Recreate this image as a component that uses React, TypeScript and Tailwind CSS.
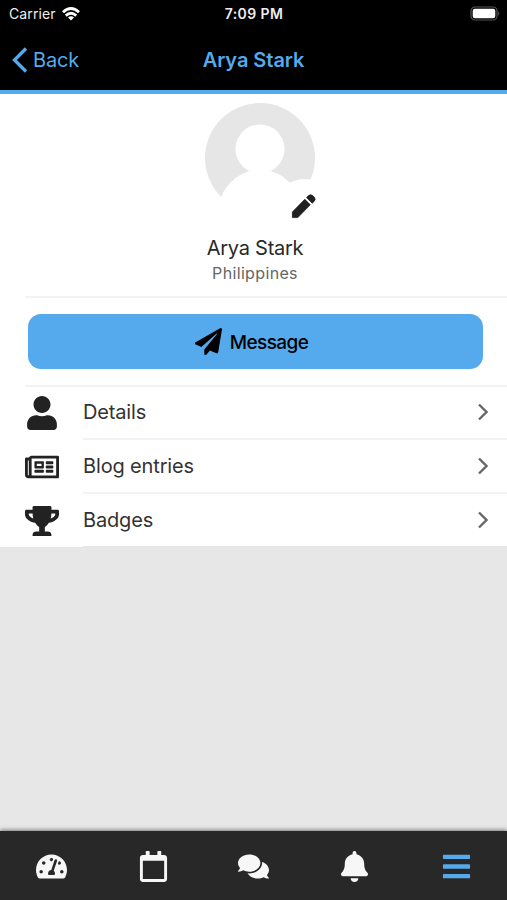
import React from "react";
import {
  FaBars,
  FaBell,
  FaComments,
  FaPaperPlane,
  FaRegCalendar,
  FaRegNewspaper,
  FaTachometerAlt,
  FaTrophy,
  FaUser,
} from "react-icons/fa";

function StatusBar() {
  return (
    <div className="grid h-7 grid-cols-3 items-center pl-[7px] pr-[6px] text-[13px] leading-none text-[#eee]">
      <div className="flex items-center gap-[6px] pl-[2px]">
        <span className="text-[14px] tracking-[0.1px]">Carrier</span>
        <svg width="18" height="14" viewBox="0 0 18 14" fill="none" stroke="#fff" strokeWidth="2.8">
          <path d="M1 5.2Q9-2.2 17 5.2" />
          <path d="M3.8 8.6Q9 3.8 14.2 8.6" />
          <path d="M6 10.6Q9 8 12 10.6L9 13.5Z" fill="#fff" stroke="none" />
        </svg>
      </div>
      <span className="text-center text-[14px] font-semibold tracking-[0.4px]">7:09 PM</span>
      <svg className="justify-self-end" width="31" height="16" viewBox="0 0 31 16">
        <rect x="1" y="1" width="26" height="13" rx="4" fill="none" stroke="#555" strokeWidth="1.2" />
        <rect x="2.7" y="2.7" width="22.6" height="9.6" rx="2.2" fill="#fff" />
        <path d="M28.3 5.2Q30.3 7.5 28.3 9.8Z" fill="#666" />
      </svg>
    </div>
  );
}

function Avatar() {
  return (
    <svg className="ml-[13px] shrink-0" width="112" height="120" viewBox="0 0 112 120">
      <circle cx="56" cy="55" r="55" fill="#e6e6e6" />
      <circle cx="56" cy="46" r="24.5" fill="#fff" />
      <path d="M0 120L17 94.5C21.5 83 31 73 43 69C45 67 67 67 69 69C76 71 81 75 85.5 79.5L112 79V120Z" fill="#fff" />
      <ellipse cx="101" cy="103" rx="29" ry="27" fill="#fff" />
      <g fill="#202020" stroke="#202020" strokeWidth="0.8" strokeLinejoin="round">
        <path d="M88.4 109L100.8 96.3L106.3 101.8L93.8 114.6H88.4Z" />
        <path d="M102.5 94.6L104.6 92.6Q106.5 90.9 108.7 92.6L110.4 94.3Q112 96.3 110.3 98.2L108.2 100.2Z" />
      </g>
    </svg>
  );
}

function Chevron() {
  return (
    <svg width="10" height="18" viewBox="0 0 10 18" fill="none" stroke="#666" strokeWidth="2.3">
      <path d="M1 1.5L8.5 9L1 16.5" />
    </svg>
  );
}

function Row({ icon, label }: { icon: React.ReactNode; label: string }) {
  return (
    <div className="group flex h-[54px] pl-[25px] last:h-[53px]">
      <div className="flex w-[34px] items-center justify-center text-[#222]">{icon}</div>
      <div className="ml-6 flex flex-1 items-center justify-between border-b-2 border-[#f3f3f3] pr-[19px] group-last:border-b group-last:border-[#e7e7e7]">
        <span className="text-[20px] tracking-[-0.15px] text-[#333]">{label}</span>
        <Chevron />
      </div>
    </div>
  );
}

export default function App() {
  return (
    <div className="flex h-[900px] w-[507px] flex-col bg-[#e7e7e7] font-['Inter','Liberation_Sans',sans-serif]">
      <header className="h-[94px] shrink-0 border-b-4 border-[#55aaeb] bg-black text-[#55aaeb]">
        <StatusBar />
        <div className="grid h-[63px] grid-cols-3 items-center px-3">
          <div className="flex items-center gap-[5px] text-[20px] tracking-[-0.2px]">
            <svg width="16" height="26" viewBox="0 0 16 26" fill="none" stroke="currentColor" strokeWidth="3.3">
              <path d="M14 1.5L2.5 13L14 24.5" />
            </svg>
            Back
          </div>
          <h1 className="pt-px text-center text-[20px] font-semibold tracking-[-0.05px]">Arya Stark</h1>
        </div>
      </header>

      <main className="bg-white">
        <section className="flex h-[202px] flex-col items-center pt-[9px]">
          <Avatar />
          <p className="ml-[3px] mt-[13px] text-[20px] leading-[24px] tracking-[-0.25px] text-[#282828]">Arya Stark</p>
          <p className="ml-[3px] mt-[3px] text-[16px] leading-[20px] tracking-[0.35px] text-[#666]">Philippines</p>
        </section>
        <div className="ml-[25px] h-[91px] border-y-2 border-[#f3f3f3] pl-[3px] pt-[16px]">
          <button className="flex h-[55px] w-[455px] items-center justify-center gap-[8px] rounded-[13px] bg-[#55aaed] pr-[8px] text-[19px] font-medium tracking-[-0.6px] text-black">
            <FaPaperPlane size={27} />
            <span className="pt-[3px]">Message</span>
          </button>
        </div>
        <div className="-mt-px">
          <Row icon={<FaUser size={34} />} label="Details" />
          <Row icon={<FaRegNewspaper size={34} />} label="Blog entries" />
          <Row icon={<FaTrophy size={34} />} label="Badges" />
        </div>
      </main>

      <nav className="mt-auto grid h-[69px] grid-cols-5 items-center justify-items-center bg-[#282828] pt-[1px] text-[#f7f7f7] shadow-[0_-1px_4px_#777]">
        <FaTachometerAlt className="ml-[2px]" size={31} />
        <FaRegCalendar className="ml-[2px]" size={31} />
        <FaComments size={31} />
        <FaBell size={31} />
        <FaBars size={31} color="#55aaeb" />
      </nav>
    </div>
  );
}
